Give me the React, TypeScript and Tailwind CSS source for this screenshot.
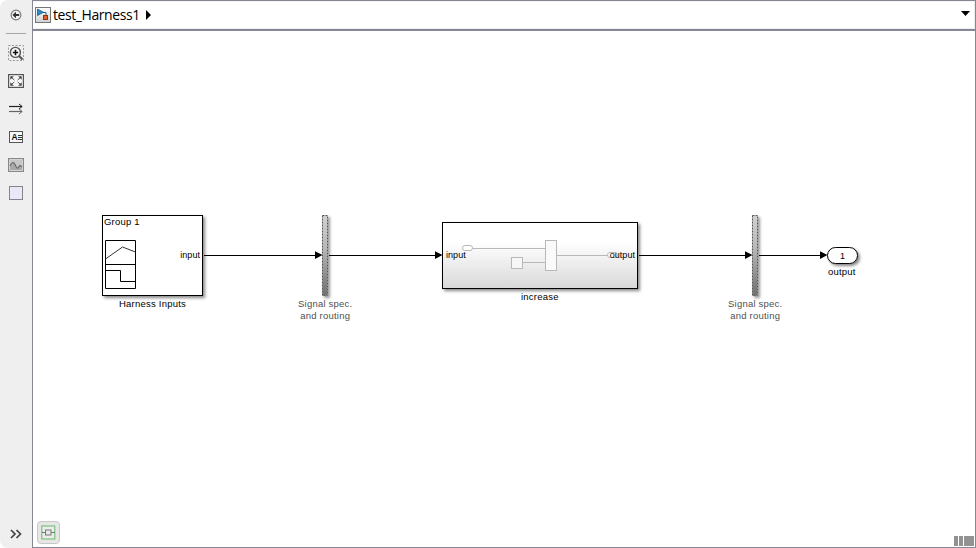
import type { ReactNode } from 'react';

const ui = "font-['Open_Sans','Noto_Sans',sans-serif]";

function ToolButton({ children, label }: { children: ReactNode; label: string }) {
  return (
    <button aria-label={label} className="flex h-7 w-8 items-center justify-center">
      <svg width="16" height="16" viewBox="0 0 16 16" fill="none">{children}</svg>
    </button>
  );
}

function Sidebar() {
  return (
    <aside className="flex w-8 shrink-0 flex-col items-center rounded-l-lg bg-[#efefef]">
      <div className="h-[1px]" />
      <ToolButton label="Back">
        <circle cx="8" cy="8" r="4.9" stroke="#777" strokeWidth="1.1" fill="#f4f4f4" />
        <path d="M4.4 8 8 4.700v2.200h3.200v2.200H8v2.200Z" fill="#333" />
      </ToolButton>
      <div className="mt-1 mb-[5px] h-px w-5 bg-[#a6a6a6]" />
      <ToolButton label="Zoom">
        <rect x=".5" y=".5" width="15" height="15" stroke="#999" strokeDasharray="2 1.5" />
        <path d="m10.8 10.8 3.7 3.700" stroke="#555" strokeWidth="2.2" />
        <circle cx="7.4" cy="7.4" r="5" fill="#fafafa" stroke="#555" strokeWidth="1.4" />
        <path d="M4.8 7.500h5.400M7.500 4.800v5.400" stroke="#111" strokeWidth="1.600" />
      </ToolButton>
      <ToolButton label="Fit to view">
        <rect x=".6" y="1.600" width="14.800" height="12.800" fill="#f6f6f6" stroke="#555" strokeWidth="1.200" />
        <path d="M2.300 3.300h3.600L2.300 6.700ZM13.700 3.300h-3.600l3.600 3.400ZM13.700 12.700h-3.600l3.600-3.400ZM2.300 12.700h3.600L2.300 9.300Z" fill="#444" />
        <path d="m4 5 2.400 2M12 5 9.600 7M12 11 9.600 9M4 11l2.400-2" stroke="#555" />
      </ToolButton>
      <ToolButton label="Signals">
        <path d="M1 5.500h13" stroke="#222" strokeWidth="1.200" />
        <path d="m11 3 3.200 2.500L11 8" stroke="#222" />
        <path d="M1 10.500h13" stroke="#666" strokeWidth="1.200" />
        <path d="m11 8 3.200 2.500L11 13" stroke="#666" />
      </ToolButton>
      <button aria-label="Annotation" className="flex h-7 w-8 items-center justify-center">
        <span className="flex h-3 w-[14px] items-center border border-[#555] bg-[#f8f8f8] pl-px">
          <span className="w-[7px] font-['Liberation_Sans',sans-serif] text-[8.500px] leading-none font-bold text-[#111]">A</span>
          <span className="flex flex-col gap-px">
            <i className="h-px w-1 bg-[#333]" /><i className="h-px w-1 bg-[#333]" /><i className="h-px w-1 bg-[#333]" />
          </span>
        </span>
      </button>
      <ToolButton label="Image">
        <rect x=".6" y="1.600" width="14.800" height="12.800" fill="#e8e8e8" stroke="#888" strokeWidth="1.200" />
        <rect x="2" y="3" width="12" height="10" fill="#c6c6c6" />
        <path d="M2 9c2-4.500 4-4.500 5.500-.5S10 10.500 11 9s2-.5 3 1v3H2Z" fill="#a8a8a8" />
        <path d="M2 9c2-4.500 4-4.500 5.500-.5S10 11.500 11 9.500s2-.5 3 .5" stroke="#666" strokeWidth="1.100" />
      </ToolButton>
      <ToolButton label="Area">
        <rect x="1.500" y="1.500" width="13" height="13" fill="#e9e8f8" stroke="#858589" />
      </ToolButton>
      <div className="mt-auto">
        <ToolButton label="Expand">
          <path d="m3 4 4 4-4 4M8.500 4l4 4-4 4" stroke="#444" strokeWidth="1.700" />
        </ToolButton>
      </div>
    </aside>
  );
}

function Breadcrumb() {
  return (
    <header className="flex h-[31px] shrink-0 items-center border-t border-b-2 border-[#858894] pr-[5px] pl-[2px] shadow-[inset_-1px_0_0_#eee,inset_0_1px_0_#f4f4f4,inset_0_-1px_0_#eee]">
      <svg width="16" height="16" viewBox="0 0 16 16">
        <defs>
          <linearGradient id="modelIcon" x1="0" y1="0" x2="0" y2="1"><stop stopColor="#fff" /><stop offset="1" stopColor="#d0d0d0" /></linearGradient>
        </defs>
        <rect x=".5" y=".5" width="15" height="15" fill="url(#modelIcon)" stroke="#777" />
        <path d="M2.500 2v6.500l6-3.250Z" fill="#2c8ac6" stroke="#175d91" strokeWidth=".8" />
        <path d="M8 5.500h3V9" stroke="#246088" fill="none" />
        <rect x="8.500" y="8.500" width="4" height="4" fill="#e65c2b" stroke="#8e3214" />
      </svg>
      <span className={`${ui} ml-[2px] w-[86px] text-[14px] leading-5 tracking-[-0.42px] whitespace-nowrap text-black`}>test_Harness1</span>
      <svg className="mb-px ml-[7px]" width="5" height="10" viewBox="0 0 5 10"><path d="M0 0v10l5-5Z" /></svg>
      <svg className="mb-[3px] ml-auto" width="9" height="5" viewBox="0 0 9 5"><path d="M0 0h9L4.500 5Z" /></svg>
    </header>
  );
}

/* Text on the model canvas. Port labels are slightly smaller than block names. */
function Label({ at, children, muted, port }: { at: string; children: ReactNode; muted?: boolean; port?: boolean }) {
  return (
    <div className={`absolute text-center leading-3 whitespace-nowrap ${port ? 'text-[9px] tracking-[0.05px]' : 'text-[9.5px] tracking-[0.22px]'} ${muted ? 'text-[#505050]' : 'text-black'} ${at}`}>{children}</div>
  );
}

function Wires() {
  return (
    <svg className="absolute top-0 left-0" width="942" height="516" viewBox="33 31 942 516">
      <path d="M204 255.500h112M329 255.500h107M639 255.500h107M759 255.500h62" stroke="#000" />
      <path d="m315 251.300 7.500 3.800-7.500 3.800ZM435 251.300l7.500 3.800-7.500 3.800ZM745 251.300l7.500 3.800-7.500 3.800ZM820 251.300l7.500 3.800-7.500 3.800Z" />
    </svg>
  );
}

function HarnessInputs() {
  return (
    <div className="absolute top-[184px] left-[69px] h-[81px] w-[101px] border border-black bg-white shadow-[2px_2px_3px_#888]">
      <Label at="left-px top-0">Group 1</Label>
      <svg className="absolute top-[24px] left-[2px]" width="31" height="49" viewBox="0 0 31 49" fill="none" stroke="#000">
        <path d="M.5.500h30v48H.5ZM.5 24.500h30" />
        <path d="m.5 19 17-12 13 5" stroke="#333" />
        <path d="M.5 30.500h15v11h15" />
      </svg>
      <Label port at="right-[2px] top-[33px]">input</Label>
    </div>
  );
}

function Routing({ at }: { at: string }) {
  return (
    <div className={`absolute top-[184px] h-[81px] w-[6px] shadow-[2px_2px_3px_#999] ${at}`}>
      <svg className="block" width="6" height="81" viewBox="0 0 6 81">
        <defs>
          <linearGradient id="routing" x1="0" y1="0" x2="0" y2="1"><stop stopColor="#d0d0d0" /><stop offset=".4" stopColor="#b8b8b8" /><stop offset="1" stopColor="#707070" /></linearGradient>
        </defs>
        <rect x=".5" y=".5" width="5" height="80" fill="url(#routing)" stroke="#555" strokeDasharray="2 1" />
      </svg>
    </div>
  );
}

function Increase() {
  return (
    <div className="absolute top-[191px] left-[409px] h-[67px] w-[196px] border border-black bg-linear-to-b from-white from-30% to-[#d9d9d9] shadow-[2px_2px_3px_#888]">
      <svg className="absolute top-0 left-0" width="194" height="65" viewBox="443 223 194 65" fill="none" stroke="#b8b8b8">
        <rect x="462.500" y="245.500" width="10" height="5" rx="2.500" fill="#fff" />
        <path d="M473 248.500h72M523 262.500h22M557 255.500h51" />
        <rect x="511.500" y="257.500" width="11" height="11" fill="#f6f6f6" />
        <rect x="545.500" y="240.500" width="11" height="30" fill="#fafafa" />
        <rect x="607.500" y="252.500" width="10" height="5" rx="2.500" fill="#fff" />
      </svg>
      <Label port at="left-[3px] top-[26px]">input</Label>
      <Label port at="right-[2px] top-[26px]">output</Label>
    </div>
  );
}

function Canvas() {
  return (
    <main className="relative min-h-0 flex-1 overflow-hidden border-b border-[#858894] bg-white font-['Liberation_Sans',sans-serif]">
      <HarnessInputs />
      <Routing at="left-[289px]" />
      <Increase />
      <Routing at="left-[719px]" />
      <div className="absolute top-[216px] left-[794px] flex h-[17px] w-[31px] items-center justify-center rounded-full border border-black bg-white text-[9px] leading-3 shadow-[2px_2px_3px_#888]">1</div>
      <Wires />
      <Label at="left-[86px] top-[267px]">Harness Inputs</Label>
      <Label at="left-[265px] top-[267px]" muted>Signal spec.<br />and routing</Label>
      <Label at="left-[488px] top-[260px]">increase</Label>
      <Label at="left-[695px] top-[267px]" muted>Signal spec.<br />and routing</Label>
      <Label at="left-[795px] top-[235px]">output</Label>

      <button aria-label="Harness" className="absolute bottom-[3px] left-1 flex h-[23px] w-[23px] items-center justify-center rounded border border-[#c8c8c8] bg-[#e6e6e6]">
        <svg width="15" height="15" viewBox="0 0 15 15" fill="none">
          <rect x=".75" y="1" width="13" height="13" fill="#ececec" stroke="#83c883" strokeWidth="1.300" />
          <path d="M1 7.500h3M10 7.500h4" stroke="#777" />
          <rect x="4.500" y="5" width="5.500" height="5" fill="#e8e8e8" stroke="#777" />
        </svg>
      </button>
      <div className="absolute right-[1px] bottom-[1px] flex gap-px">
        <i className="h-[10px] w-1 bg-[#929292]" /><i className="h-[10px] w-1 bg-[#929292]" /><i className="h-[10px] w-[10px] bg-[#929292]" />
      </div>
    </main>
  );
}

export default function App() {
  return (
    <div className="flex h-[548px] w-[976px] overflow-hidden bg-white">
      <Sidebar />
      <section className="flex min-w-0 flex-1 flex-col border-x border-[#858894]">
        <Breadcrumb />
        <Canvas />
      </section>
    </div>
  );
}
